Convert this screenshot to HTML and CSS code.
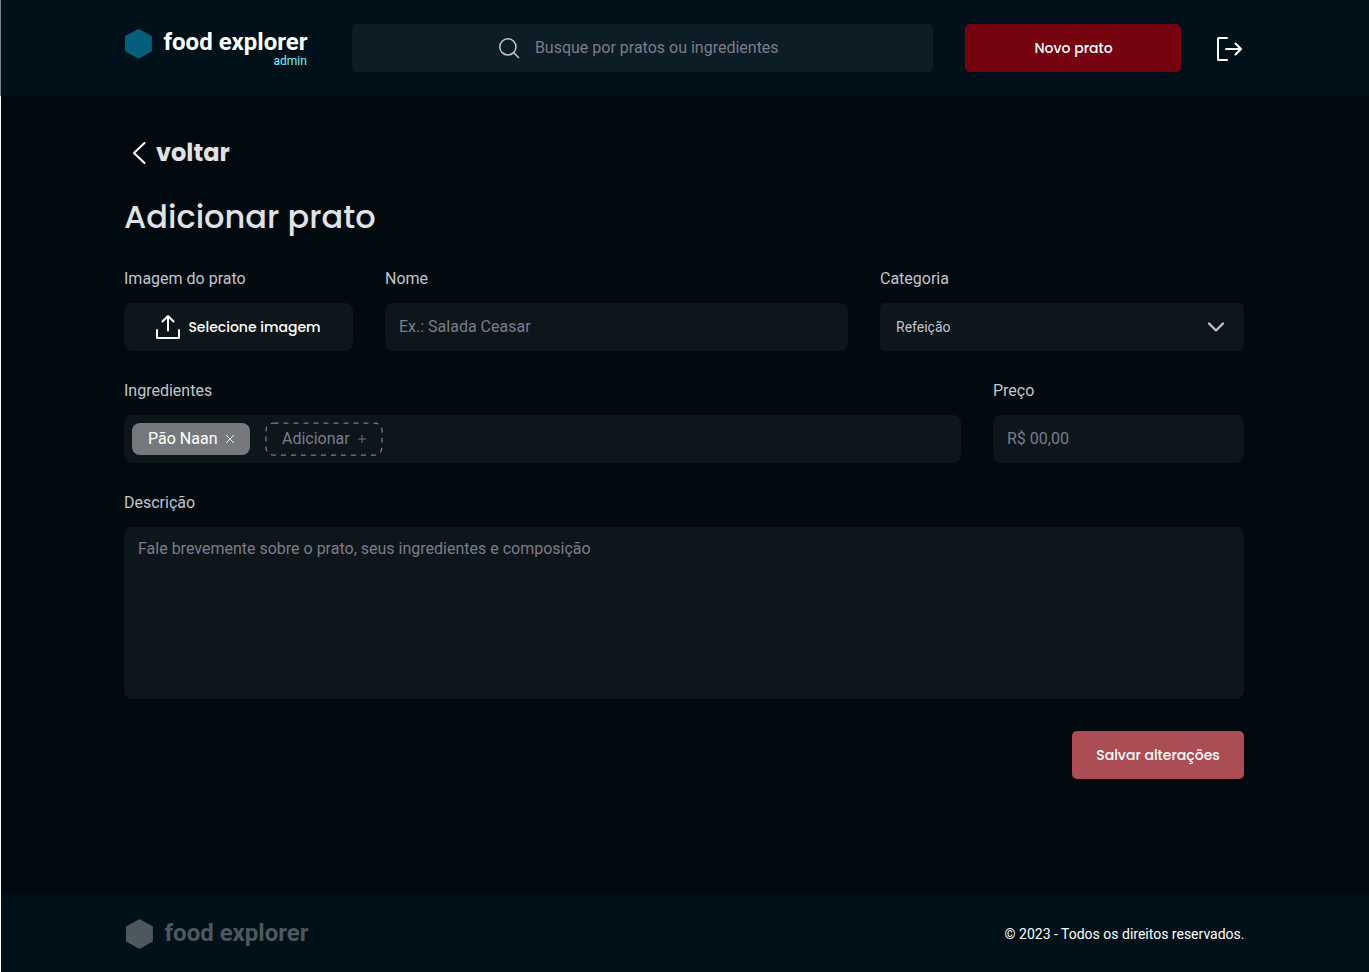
FILE: index.html
```html
<!DOCTYPE html>
<html lang="pt-BR">
<head>
<meta charset="utf-8">
<title>food explorer - Adicionar prato</title>
<link rel="stylesheet" href="styles.css">
</head>
<body>
<div class="page">
  <header class="header">
    <div class="brand">
      <svg class="brand-mark" width="28" height="30" viewBox="-1 0 28 30"><path d="M13.500-.3 26.900 7.200v15L13.500 29.700 0 22.200v-15z" fill="#065e7c"/></svg>
      <div class="brand-text">
        <span class="brand-name">food explorer</span>
        <span class="brand-role">admin</span>
      </div>
    </div>
    <div class="search">
      <svg width="24" height="24" viewBox="0 0 24 24" fill="none" stroke="#c4c4cc" stroke-width="1.500" stroke-linecap="round"><circle cx="10.900" cy="10.900" r="8.100"/><path d="M16.700 16.700 21.500 21.500"/></svg>
      <span>Busque por pratos ou ingredientes</span>
    </div>
    <button class="btn btn-new" type="button">Novo prato</button>
    <svg width="32" height="32" viewBox="0 0 32 32" fill="none" stroke="#fff" stroke-width="2" stroke-linecap="round" stroke-linejoin="round"><path d="M14 28H5.500a.5.500 0 0 1-.5-.5v-21a.5.500 0 0 1 .5-.5H14M13 17h15M22.500 11.500l5.500 5.500-5.500 5.500"/></svg>
  </header>
  <main class="main">
    <a class="back">
      <svg width="32" height="32" viewBox="0 0 32 32" fill="none" stroke="#fff" stroke-width="2" stroke-linecap="round" stroke-linejoin="round"><path d="M20.500 6 10 16 20.500 26"/></svg>
      <span>voltar</span>
    </a>
    <h1 class="title">Adicionar prato</h1>
    <form class="form">
      <div class="row">
        <div class="field field-image">
          <label class="label">Imagem do prato</label>
          <div class="box box-upload">
            <svg width="24" height="24" viewBox="0 0 24 24" fill="none" stroke="#fff" stroke-width="2" stroke-linecap="round" stroke-linejoin="round"><path d="M1 15v7.500a.5.500 0 0 0 .5.500h21a.5.500 0 0 0 .5-.5V15M12 15.500V1M6.500 6.500 12 1l5.500 5.500"/></svg>
            <span>Selecione imagem</span>
          </div>
        </div>
        <div class="field field-name">
          <label class="label">Nome</label>
          <div class="box">Ex.: Salada Ceasar</div>
        </div>
        <div class="field field-category">
          <label class="label">Categoria</label>
          <div class="box box-select">
            <span>Refeição</span>
            <svg width="24" height="24" viewBox="0 0 24 24" fill="none" stroke="#c4c4cc" stroke-width="2.200" stroke-linecap="round" stroke-linejoin="round"><path d="m5 8.500 7 7 7-7"/></svg>
          </div>
        </div>
      </div>
      <div class="row">
        <div class="field field-ingredients">
          <label class="label">Ingredientes</label>
          <div class="box box-tags">
            <span class="tag">Pão Naan
              <svg width="10" height="10" viewBox="0 0 10 10" fill="none" stroke="#fff" stroke-width=".9"><path d="m1 1 8 8M9 1 1 9"/></svg>
            </span>
            <span class="tag tag-add">
              <svg class="tag-outline" width="118" height="34" viewBox="0 0 118 34" fill="none" stroke="#7c7c8a"><rect x="1" y="1" width="116" height="32" rx="7.500" stroke-width="1.250" stroke-dasharray="5 5"/></svg>
              Adicionar
              <svg width="8" height="8" viewBox="0 0 8 8" fill="none" stroke="#7c7c8a" stroke-width=".9"><path d="M0 4h8M4 0v8"/></svg>
            </span>
          </div>
        </div>
        <div class="field field-price">
          <label class="label">Preço</label>
          <div class="box">R$ 00,00</div>
        </div>
      </div>
      <div class="field">
        <label class="label">Descrição</label>
        <div class="box box-area">Fale brevemente sobre o prato, seus ingredientes e composição</div>
      </div>
      <button class="btn btn-save" type="button">Salvar alterações</button>
    </form>
  </main>
  <footer class="footer">
    <div class="footer-brand">
      <svg width="28" height="30" viewBox="0 0 28 30"><path d="M13.500 0 26.900 7.500v15L13.500 30 0 22.500v-15z" fill="#4d585e"/></svg>
      <span class="brand-name">food explorer</span>
    </div>
    <span class="copy">© 2023 - Todos os direitos reservados.</span>
  </footer>
</div>
</body>
</html>
```
FILE: styles.css
```css
* { box-sizing: border-box; margin: 0; }
body { background: #fff; font-family: Roboto, sans-serif; font-size: 16px; color: #c4c4cc; }
svg { display: block; flex: none; overflow: visible; }
.page { margin-left: 1px; height: 972px; background: #000a0f; display: flex; flex-direction: column; }
.header { height: 96px; margin-left: -1px; padding: 0 123px 0 123.4px; border-left: 1px solid #7f888c; background: #00111a; display: flex; align-items: center; flex: none; }
.brand { width: 228px; flex: none; display: flex; gap: 11.1px; align-self: flex-start; padding-top: 30px; }
.brand-mark { margin-top: -1px; }
.brand-text { display: flex; flex-direction: column; width: 144px; }
.brand-name { font-size: 24px; line-height: 24px; font-weight: 700; color: #fff; white-space: nowrap; }
.brand-role { font-size: 12px; line-height: 12px; color: #82f3ff; text-align: right; margin: 1px .6px 0 0; }
.search { width: 581px; flex: none; height: 48px; border-radius: 5px; background: #0d1d25; color: #7c7c8a; line-height: 16px; display: flex; align-items: center; justify-content: center; gap: 14px; padding: 0 10.3px 1px 0; }
.btn { height: 48px; border: 0; border-radius: 5px; padding: 0; color: #fff; font: 500 14px/24px Poppins, Inter, sans-serif; white-space: nowrap; }
.btn-new { width: 216px; flex: none; margin: 0 31.6px 0 32px; padding-left: .4px; background: #750310; }
.main { flex: 1; padding: 40px 124px 0 123px; }
.back { display: flex; align-items: center; height: 34px; color: #e1e1e6; font: 700 24px/34px Poppins, Inter, sans-serif; }
.title { margin: 24px 0 32px; color: #e1e1e6; font: 500 32px/45px Poppins, Inter, sans-serif; }
.form { display: flex; flex-direction: column; gap: 32px; width: 1120px; }
.row { display: flex; gap: 32px; }
.field { display: flex; flex-direction: column; gap: 16px; }
.field-image { width: 229px; }
.field-name { width: 463px; }
.field-category { width: 364px; }
.field-ingredients { width: 837px; }
.field-price { width: 251px; }
.label { line-height: 16px; }
.box { height: 48px; border-radius: 8px; background: #0d161b; padding: 0 14px; color: #7c7c8a; line-height: 16px; display: flex; align-items: center; }
.box-upload { padding: 0 32px; gap: 8.4px; color: #fff; font: 500 14px/24px Poppins, Inter, sans-serif; white-space: nowrap; }
.box-select { border-radius: 5px; padding: 0 16px; justify-content: space-between; font-size: 14px; color: #c4c4cc; }
.box-tags { padding: 0 8px; gap: 15px; }
.tag { height: 32px; width: 118px; padding: 0 15px 0 16px; border-radius: 8px; background: #76797b; color: #fff; display: flex; align-items: center; justify-content: space-between; position: relative; white-space: nowrap; }
.tag-add { height: 34px; background: none; color: #7c7c8a; padding: 0 17px; }
.tag-outline { position: absolute; left: 0; top: 0; }
.box-area { height: 172px; padding-top: 14px; align-items: flex-start; }
.btn-save { width: 172px; align-self: flex-end; background: #ab4d55; }
.footer { height: 77px; flex: none; padding: 0 124.5px; background: #00111a; display: flex; align-items: center; justify-content: space-between; }
.footer-brand { display: flex; align-items: center; gap: 11px; }
.footer-brand .brand-name { color: #4d585e; padding-bottom: 2px; }
.copy { font-size: 14px; color: #fff; }
```
